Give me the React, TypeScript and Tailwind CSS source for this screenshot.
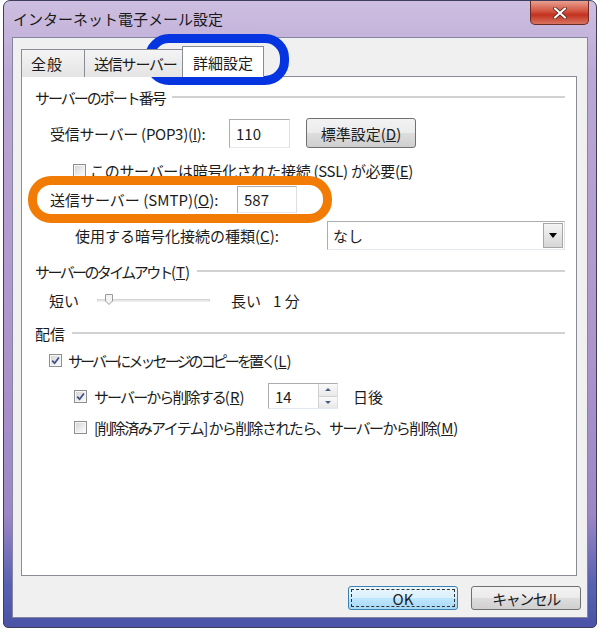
import React from 'react';

const CheckBox = ({ checked }: { checked?: boolean }) => (
  <span className="flex h-[13px] w-[13px] shrink-0 items-center justify-center border border-[#8e8f8f] bg-white">
    <span className="flex h-[11px] w-[11px] items-center justify-center border border-[#f6f6f6] bg-[linear-gradient(135deg,#d6d6d6,#fbfbfb)]">
      {checked && (
        <svg viewBox="0 0 9 9" className="h-[9px] w-[9px]">
          <path d="M1.2 4.6 L3.6 7.2 L7.9 1.4" stroke="#3b4f86" strokeWidth="1.7" fill="none" />
        </svg>
      )}
    </span>
  </span>
);

const SectionHeader = ({ children }: { children: React.ReactNode }) => (
  <div className="flex h-[20px] items-center gap-[7px]">
    <span className="whitespace-nowrap">{children}</span>
    <span className="h-[2px] flex-1 bg-[#d2d2d2]" />
  </div>
);

const TextBox = ({ value, className }: { value: string; className: string }) => (
  <div
    className={`flex items-center border border-[#abadb3] border-r-[#dbdfe6] border-b-[#e3e9ef] bg-white pl-[6px] ${className}`}
  >
    {value}
  </div>
);

export default function App() {
  return (
    <div className="relative h-[631px] w-[600px] overflow-hidden bg-white font-['Noto_Sans_CJK_JP',sans-serif] text-[15px] leading-none text-[#1c1c1c]">
      {/* Window frame */}
      <div className="ml-[3px] flex h-[628px] w-[594px] flex-col rounded-t-[7px] rounded-b-[5px] border border-[#3d3d5c] bg-[linear-gradient(to_bottom,#cdbfe0_0%,#bba7d5_12%,#ad95cc_55%,#9c87c6_82%,#5962b2_93%,#4a53a6_100%)]">
        {/* Title bar */}
        <div className="flex h-[36px] shrink-0 items-start justify-between">
          <div className="pl-[9px] pt-[10px] text-[15px] text-[#1a1a1a]">インターネット電子メール設定</div>
          <div className="mr-[7px] flex h-[24px] w-[59px] items-center justify-center rounded-b-[5px] border border-t-0 border-[#6b2b25] bg-[linear-gradient(to_bottom,#e89f90_0%,#d3533f_45%,#c3321f_60%,#d8735f_100%)]">
            <svg viewBox="0 0 14 12" className="h-[12px] w-[14px]">
              <path d="M2 1.5 L12 10.5 M12 1.5 L2 10.5" stroke="#4a1a14" strokeWidth="3.6" strokeLinecap="round" />
              <path d="M2 1.5 L12 10.5 M12 1.5 L2 10.5" stroke="#ffffff" strokeWidth="2.2" strokeLinecap="round" />
            </svg>
          </div>
        </div>

        {/* Client area */}
        <div className="mx-[8px] mb-[9px] flex flex-1 flex-col border border-[#85869e] bg-[#f0f0f0]">
          {/* Tabs */}
          <div className="relative z-10 -mb-px ml-[8px] mt-[8px] flex h-[31px] items-end">
            <div className="flex h-[28px] w-[64px] items-center border border-b-0 border-[#898c95] bg-[linear-gradient(to_bottom,#f4f4f4,#e4e4e4)] pl-[9px] tracking-[1px]">
              全般
            </div>
            <div className="-ml-px flex h-[28px] w-[100px] items-center overflow-hidden whitespace-nowrap border border-b-0 border-[#898c95] bg-[linear-gradient(to_bottom,#f4f4f4,#e4e4e4)] pl-[9px] tracking-[-1.2px]">
              送信サーバー
            </div>
            <div className="-ml-[2px] flex h-[31px] w-[82px] items-center justify-center border border-b-0 border-[#898c95] bg-white">
              詳細設定
            </div>
          </div>

          {/* Tab panel */}
          <div className="ml-[8px] mr-[10px] flex h-[500px] flex-col border border-[#898c95] bg-white pl-[13px] pr-[11px] pt-[10px]">
            <SectionHeader>
              <span className="tracking-[-2px]">サーバーのポート番号</span>
            </SectionHeader>

            <div className="ml-[15px] mt-[11px] flex h-[30px] items-center">
              <span className="w-[179px] whitespace-nowrap tracking-[-0.3px]">
                受信サーバー (POP3)(<u>I</u>):
              </span>
              <TextBox value="110" className="h-[29px] w-[61px]" />
              <div className="ml-[16px] flex h-[30px] w-[110px] items-center justify-center rounded-[3px] border border-[#707070] bg-[linear-gradient(to_bottom,#f2f2f2_0%,#ebebeb_50%,#dddddd_51%,#cfcfcf_100%)]">
                標準設定(<u>D</u>)
              </div>
            </div>

            <div className="ml-[38px] mt-[13px] flex h-[18px] items-center gap-[4px]">
              <CheckBox />
              <span className="whitespace-nowrap tracking-[-0.3px]">
                このサーバーは暗号化された接続 (SSL) が必要(<u>E</u>)
              </span>
            </div>

            <div className="ml-[15px] mt-[7px] flex h-[27px] items-center">
              <span className="w-[187px] whitespace-nowrap">
                送信サーバー (SMTP)(<u>O</u>):
              </span>
              <TextBox value="587" className="h-[27px] w-[60px]" />
            </div>

            <div className="ml-[40px] mt-[8px] flex h-[29px] items-center">
              <span className="w-[252px] whitespace-nowrap">
                使用する暗号化接続の種類(<u>C</u>):
              </span>
              <div className="flex h-[29px] flex-1 items-center justify-between border border-[#abadb3] border-b-[#e3e9ef] border-r-[#dbdfe6] bg-white pl-[5px] pr-[1px]">
                <span>なし</span>
                <div className="flex h-[25px] w-[20px] items-center justify-center border border-[#a7a7a7] bg-[linear-gradient(to_bottom,#f4f4f4,#d6d6d6)]">
                  <svg viewBox="0 0 8 5" className="h-[5px] w-[8px]">
                    <path d="M0 0 L8 0 L4 5 Z" fill="#000" />
                  </svg>
                </div>
              </div>
            </div>

            <div className="mt-[11px]">
              <SectionHeader>
                <span className="tracking-[-2.6px]">サーバーのタイムアウト</span>(<u>T</u>)
              </SectionHeader>
            </div>

            <div className="ml-[14px] mt-[9px] flex h-[20px] items-center">
              <span className="w-[30px]">短い</span>
              <div className="relative ml-[18px] flex h-[14px] w-[113px] items-center">
                <span className="h-[3px] w-full border border-[#d6d6d6] border-b-[#eeeeee] bg-[#e7e7e7]" />
                <svg viewBox="0 0 8 11" className="absolute left-[8px] top-[1px] h-[11px] w-[8px]">
                  <path d="M0.5 0.5 H7.5 V7 L4 10.5 L0.5 7 Z" fill="#f3f3f3" stroke="#9a9a9a" />
                </svg>
              </div>
              <span className="ml-[21px] w-[30px]">長い</span>
              <span className="ml-[12px]">1 分</span>
            </div>

            <div className="mt-[13px]">
              <SectionHeader>配信</SectionHeader>
            </div>

            <div className="ml-[14px] mt-[7px] flex h-[20px] items-center gap-[6px]">
              <CheckBox checked />
              <span className="whitespace-nowrap">
                <span className="tracking-[-2.9px]">サーバーにメッセージのコピーを置く</span>(<u>L</u>)
              </span>
            </div>

            <div className="ml-[39px] mt-[13px] flex h-[26px] items-center">
              <CheckBox checked />
              <span className="ml-[7px] w-[174px] whitespace-nowrap">
                <span className="tracking-[-1.9px]">サーバーから削除する</span>(<u>R</u>)
              </span>
              <div className="flex h-[26px] w-[70px] items-stretch border border-[#abadb3] border-b-[#e3e9ef] border-r-[#dbdfe6] bg-white">
                <span className="flex flex-1 items-center pl-[6px]">14</span>
                <div className="flex w-[19px] flex-col border-l border-[#d0d0d0]">
                  <div className="flex flex-1 items-center justify-center border-b border-[#d0d0d0] bg-[linear-gradient(to_bottom,#fafafa,#e8e8e8)]">
                    <svg viewBox="0 0 6 3" className="h-[3px] w-[6px]">
                      <path d="M0 3 L3 0 L6 3 Z" fill="#4b5c86" />
                    </svg>
                  </div>
                  <div className="flex flex-1 items-center justify-center bg-[linear-gradient(to_bottom,#fafafa,#e8e8e8)]">
                    <svg viewBox="0 0 6 3" className="h-[3px] w-[6px]">
                      <path d="M0 0 L6 0 L3 3 Z" fill="#4b5c86" />
                    </svg>
                  </div>
                </div>
              </div>
              <span className="ml-[15px]">日後</span>
            </div>

            <div className="ml-[39px] mt-[8px] flex h-[20px] items-center gap-[7px]">
              <CheckBox />
              <span className="whitespace-nowrap">
                <span className="tracking-[-1.6px]">[削除済みアイテム] から削除されたら、サーバーから削除</span>(<u>M</u>)
              </span>
            </div>
          </div>

          {/* Dialog buttons */}
          <div className="mt-[10px] flex justify-end gap-[13px] pr-[6px]">
            <div className="flex h-[24px] w-[110px] items-center justify-center rounded-[3px] border border-[#3c7fb1] bg-[linear-gradient(to_bottom,#eaf6fd_0%,#d9f0fc_50%,#bee6fd_51%,#a7d9f5_100%)] p-[2px]">
              <div className="flex h-full w-full items-center justify-center border border-dashed border-[#333]">OK</div>
            </div>
            <div className="flex h-[24px] w-[110px] items-center justify-center rounded-[3px] border border-[#707070] bg-[linear-gradient(to_bottom,#f2f2f2_0%,#ebebeb_50%,#dddddd_51%,#cfcfcf_100%)] tracking-[-1.5px]">
              キャンセル
            </div>
          </div>
        </div>
      </div>

      {/* Annotation marks */}
      <div className="pointer-events-none absolute left-[145px] top-[34px] h-[51px] w-[144px] rounded-[24px] border-[9px] border-[#0535e0]" />
      <div className="pointer-events-none absolute left-[28px] top-[176px] h-[47px] w-[304px] rounded-[23px] border-[9px] border-[#f27b05]" />
    </div>
  );
}
